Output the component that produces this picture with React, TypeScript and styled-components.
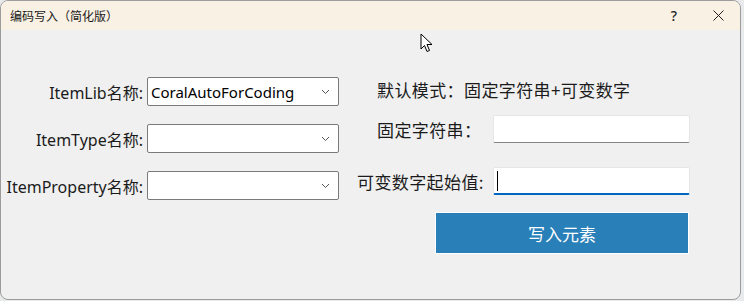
import React from 'react';
import styled, { createGlobalStyle } from 'styled-components';

const GlobalStyle = createGlobalStyle`
  html, body {
    margin: 0;
    padding: 0;
    background: #e9eaec;
  }
  body {
    font-family: 'Noto Sans', 'Noto Sans CJK SC', sans-serif;
  }
`;

const Window = styled.div`
  position: relative;
  width: 741px;
  height: 300px;
  box-sizing: border-box;
  border: 1px solid #9c9c9c;
  border-radius: 8px;
  overflow: hidden;
  background: #f0f0f0;
  display: flex;
  flex-direction: column;
`;

const TitleBar = styled.div`
  height: 29px;
  flex: 0 0 29px;
  background: #f9f1e3;
  display: flex;
  align-items: center;
  padding-left: 9px;
`;

const Title = styled.div`
  flex: 1;
  font-size: 12px;
  color: #1a1a1a;
  font-family: 'Noto Sans CJK SC', sans-serif;
`;

const TitleButton = styled.div`
  width: 44px;
  height: 29px;
  display: flex;
  align-items: center;
  justify-content: center;
  font-size: 14px;
  font-weight: 500;
  color: #222;
  font-family: 'Noto Sans', sans-serif;
`;

const Body = styled.div`
  flex: 1;
  display: flex;
  gap: 18px;
`;

const LeftPanel = styled.div`
  padding-top: 47px;
  display: grid;
  grid-template-columns: 142px 192px;
  column-gap: 4px;
  row-gap: 18px;
  align-content: start;
  align-items: center;
`;

const FieldLabel = styled.div`
  font-size: 16px;
  color: #1b1b1b;
  text-align: right;
  white-space: nowrap;
  font-family: 'Noto Sans', 'Noto Sans CJK SC', sans-serif;
`;

const Select = styled.div`
  height: 29px;
  box-sizing: border-box;
  border: 1px solid #7a7a7a;
  border-radius: 2px;
  background: #fff;
  display: flex;
  align-items: center;
  padding: 0 8px 0 3px;
  font-size: 15px;
  color: #000;
`;

const SelectValue = styled.div`
  flex: 1;
  white-space: nowrap;
`;

const RightPanel = styled.div`
  padding-top: 49px;
  display: flex;
  flex-direction: column;
`;

const ModeText = styled.div`
  padding-left: 20px;
  font-size: 17px;
  letter-spacing: 0.4px;
  line-height: 22px;
  color: #1b1b1b;
  font-family: 'Noto Sans CJK SC', sans-serif;
  margin-bottom: 14px;
`;

const FormRow = styled.div<{ $gap: number }>`
  display: flex;
  align-items: center;
  height: 28px;
  margin-bottom: ${(p) => p.$gap}px;
`;

const RowLabel = styled.div<{ $indent: number }>`
  width: 136px;
  box-sizing: border-box;
  padding-left: ${(p) => p.$indent}px;
  font-size: 17px;
  letter-spacing: 0.4px;
  color: #1b1b1b;
  white-space: nowrap;
  font-family: 'Noto Sans CJK SC', sans-serif;
`;

const TextBox = styled.div<{ $focused?: boolean }>`
  width: 197px;
  height: 28px;
  box-sizing: border-box;
  background: #fff;
  border: 1px solid #e6e6e6;
  border-bottom: ${(p) => (p.$focused ? '2px solid #0067c0' : '1px solid #868686')};
  border-radius: 2px;
  display: flex;
  align-items: center;
  padding-left: 3px;
`;

const Caret = styled.div`
  width: 1px;
  height: 20px;
  background: #000;
`;

const PrimaryButton = styled.div`
  margin-left: 78px;
  width: 254px;
  height: 42px;
  box-sizing: border-box;
  background: #2980b9;
  border: 1px solid #ffffff;
  display: flex;
  align-items: center;
  justify-content: center;
  color: #fff;
  font-size: 17px;
  font-family: 'Noto Sans CJK SC', sans-serif;
`;

const Pointer = styled.svg`
  position: absolute;
  left: 419px;
  top: 32px;
`;

const Chevron = () => (
  <svg width="9" height="6" viewBox="0 0 9 6">
    <path d="M1 1 L4.5 4.5 L8 1" fill="none" stroke="#555" strokeWidth="1" />
  </svg>
);

const CloseIcon = () => (
  <svg width="11" height="11" viewBox="0 0 11 11">
    <path d="M0.5 0.5 L10.5 10.5 M10.5 0.5 L0.5 10.5" stroke="#222" strokeWidth="1" />
  </svg>
);

const selects = [
  { label: 'ItemLib名称:', value: 'CoralAutoForCoding' },
  { label: 'ItemType名称:', value: '' },
  { label: 'ItemProperty名称:', value: '' },
];

export default function App() {
  return (
    <>
      <GlobalStyle />
      <Window>
        <TitleBar>
          <Title>编码写入（简化版）</Title>
          <TitleButton>?</TitleButton>
          <TitleButton>
            <CloseIcon />
          </TitleButton>
        </TitleBar>
        <Body>
          <LeftPanel>
            {selects.map((s) => (
              <React.Fragment key={s.label}>
                <FieldLabel>{s.label}</FieldLabel>
                <Select>
                  <SelectValue>{s.value}</SelectValue>
                  <Chevron />
                </Select>
              </React.Fragment>
            ))}
          </LeftPanel>
          <RightPanel>
            <ModeText>默认模式：固定字符串+可变数字</ModeText>
            <FormRow $gap={24}>
              <RowLabel $indent={20}>固定字符串：</RowLabel>
              <TextBox />
            </FormRow>
            <FormRow $gap={17}>
              <RowLabel $indent={0}>可变数字起始值:</RowLabel>
              <TextBox $focused>
                <Caret />
              </TextBox>
            </FormRow>
            <PrimaryButton>写入元素</PrimaryButton>
          </RightPanel>
        </Body>
        <Pointer width="13" height="20" viewBox="0 0 13 20">
          <path d="M1 1 L1 16 L4.5 12.5 L7 18.5 L9.5 17.5 L7 11.5 L12 11.5 Z" fill="#fff" stroke="#000" strokeWidth="1" strokeLinejoin="round" />
        </Pointer>
      </Window>
    </>
  );
}
